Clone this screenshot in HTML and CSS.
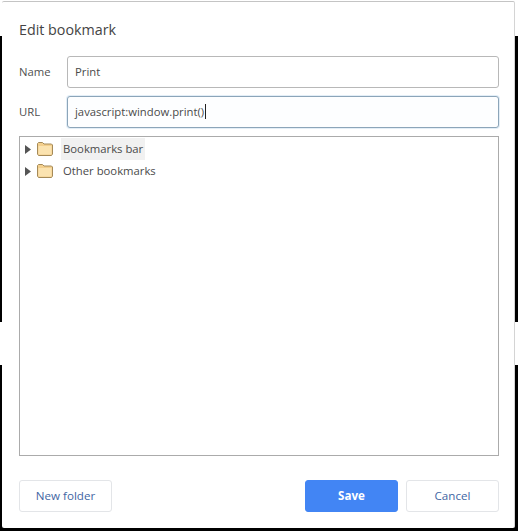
FILE: index.html
```html
<!DOCTYPE html>
<html lang="en">
<head>
<meta charset="utf-8">
<title>Edit bookmark</title>
<link rel="stylesheet" href="styles.css">
</head>
<body>
<div class="backdrop">
  <div class="band-light top"></div>
  <div class="band-dark one"></div>
  <div class="band-light mid"></div>
  <div class="band-dark two"></div>
</div>
<main class="dialog">
  <h1 class="title">Edit bookmark</h1>
  <div class="field">
    <label class="label" for="name">Name</label>
    <div class="input" id="name"><span class="value">Print</span></div>
  </div>
  <div class="field">
    <label class="label" for="url">URL</label>
    <div class="input focused" id="url"><span class="value">javascript:window.print()</span><i class="caret"></i></div>
  </div>
  <div class="tree">
    <div class="row">
      <svg class="arrow" viewBox="0 0 6 9" width="6" height="9"><path d="M0 0l6 4.500L0 9z"/></svg>
      <svg class="folder" viewBox="0 0 16 14" width="16" height="14"><path class="back" d="M.5 12V1.500l1-1h4l1.500 1.500h7.500l1 1V12l-1 1.500H1.500z"/><path class="front" d="M1.500 4h13v8.500h-13z"/></svg>
      <span class="node selected">Bookmarks bar</span>
    </div>
    <div class="row">
      <svg class="arrow" viewBox="0 0 6 9" width="6" height="9"><path d="M0 0l6 4.500L0 9z"/></svg>
      <svg class="folder" viewBox="0 0 16 14" width="16" height="14"><path class="back" d="M.5 12V1.500l1-1h4l1.500 1.500h7.500l1 1V12l-1 1.500H1.500z"/><path class="front" d="M1.500 4h13v8.500h-13z"/></svg>
      <span class="node">Other bookmarks</span>
    </div>
  </div>
  <div class="actions">
    <button class="btn">New folder</button>
    <div class="right">
      <button class="btn primary">Save</button>
      <button class="btn">Cancel</button>
    </div>
  </div>
</main>
</body>
</html>
```

FILE: styles.css
```css
* { box-sizing: border-box; }
html, body { margin: 0; height: 100%; }
body {
  width: 518px;
  height: 531px;
  position: relative;
  overflow: hidden;
  background: #fff;
  font-family: "Open Sans", "Noto Sans", sans-serif;
  font-size: 11.300px;
  color: #3c4043;
}
.backdrop { display: flex; flex-direction: column; height: 100%; }
.band-light { background: #fff; }
.band-dark { background: #000; }
.top { height: 36px; }
.one { height: 286px; }
.mid { height: 43px; }
.two { flex: 1; }

.dialog {
  position: absolute;
  left: 2px;
  top: 1px;
  width: 513px;
  height: 527px;
  background: #fff;
  border-top: 1px solid #c4c4c4;
  border-right: 1px solid #d4d4d4;
  border-radius: 2px;
  padding: 17px 15px 0 17px;
  display: flex;
  flex-direction: column;
}
.title {
  margin: 0 0 15px;
  height: 22px;
  font-size: 14.300px;
  line-height: 22px;
  font-weight: 400;
  color: #444;
}
.field { display: flex; align-items: center; margin-bottom: 8px; }
.label { width: 48px; font-size: 11.300px; color: #505050; position: relative; top: -1px; }
.input {
  width: 432px;
  height: 32px;
  border: 1px solid #b8b8b8;
  border-radius: 3px;
  padding: 0 7px 2px;
  display: flex;
  align-items: center;
  font-size: 11.300px;
  color: #4a4a4a;
}
.input.focused {
  border-color: #8ca5b9;
  box-shadow: 0 0 0 1px #e3eef7;
  background: #fdfeff;
}
.caret { width: 1px; height: 15px; background: #222; margin-left: 1px; }
.tree {
  width: 480px;
  height: 320px;
  border: 1px solid #ababab;
  padding: 1px 0 0 5px;
}
.row { display: flex; align-items: center; height: 22px; }
.arrow { fill: #555; margin-right: 6px; }
.folder { margin-right: 8px; }
.back { fill: #f3cf8d; stroke: #a58a58; stroke-width: 1; }
.front { fill: #fbe3b0; }
.node { padding: 0 2px 0 2px; line-height: 22px; color: #4a4a4a; }
.selected { background: #f1f1f1; }
.actions {
  margin-top: 24px;
  width: 480px;
  display: flex;
  justify-content: space-between;
}
.right { display: flex; gap: 8px; }
.btn {
  width: 93px;
  height: 32px;
  padding: 0 0 2px;
  border: 1px solid #e3e5e8;
  border-radius: 3px;
  background: #fff;
  font-family: inherit;
  font-size: 11.600px;
  font-weight: 500;
  color: #3f66a3;
}
.primary {
  background: #4285f4;
  border-color: #4285f4;
  color: #fff;
  font-weight: 700;
}
```
